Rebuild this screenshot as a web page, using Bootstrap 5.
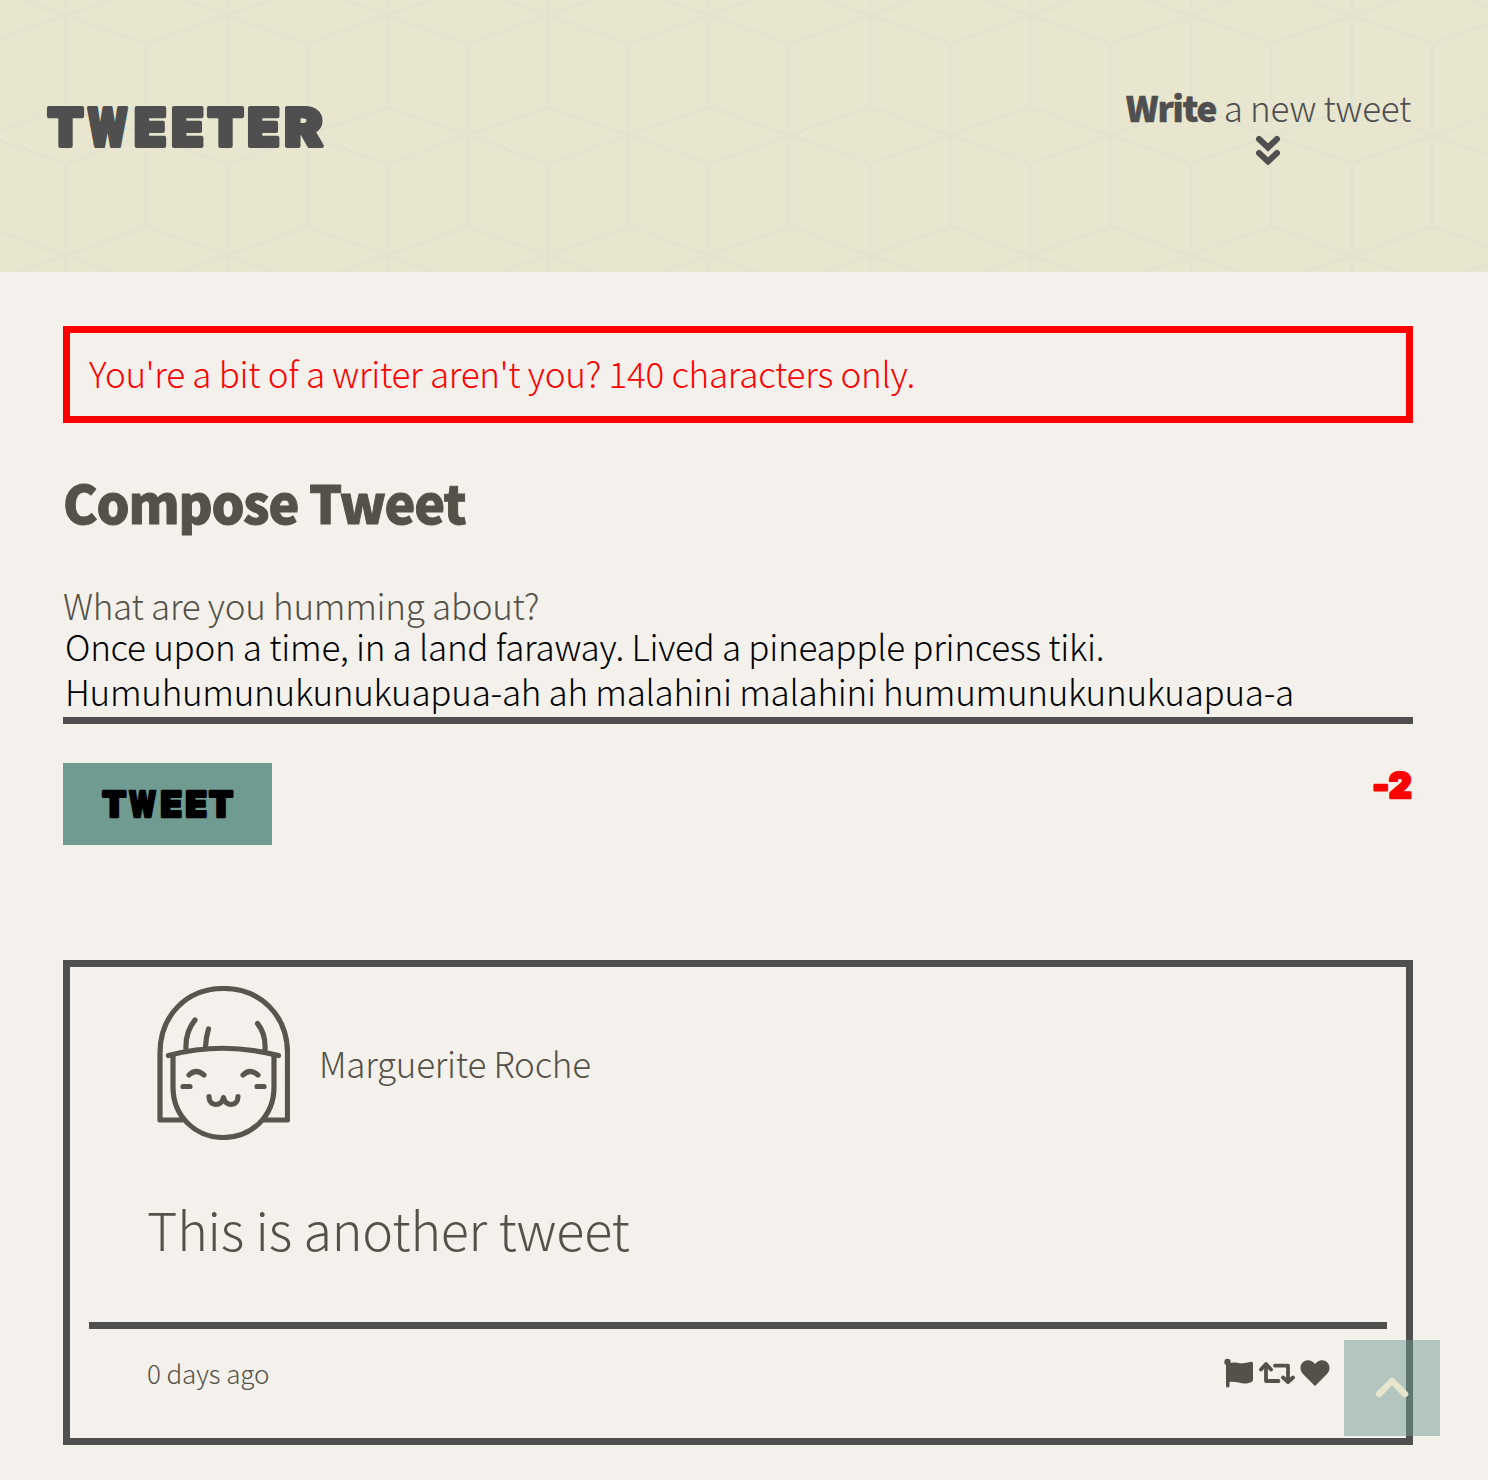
<!DOCTYPE html>
<html lang="en">
<head>
<meta charset="utf-8">
<meta name="viewport" content="width=device-width, initial-scale=1">
<title>Tweeter</title>
<link href="https://cdn.jsdelivr.net/npm/bootstrap@5.3.0/dist/css/bootstrap.min.css" rel="stylesheet">
<script src="https://cdn.jsdelivr.net/npm/bootstrap@5.3.0/dist/js/bootstrap.bundle.min.js" defer></script>
<style>
  body { background: #f4f1ec; color: #545149; font-family: "Noto Sans CJK SC", "Open Sans", sans-serif; font-weight: 300; font-size: 35px; line-height: 46px; letter-spacing: -.26px; height: 1480px; overflow: hidden; }
  .ink { color: #4f4f4f; }
  .topbar { height: 272px; padding: 0 77px 0 47px; background-color: #e8e6cf;
    background-image: url("data:image/svg+xml,%3Csvg xmlns='http://www.w3.org/2000/svg' width='160.75' height='240' viewBox='0 0 160.75 240'%3E%3Cpath d='M-14.5 43.5L66 15.5L146.250 43.5L226.750 15.5M-14.5 -13.5L66 15.5L146.250 -13.5L226.750 15.5M-94.750 163.5L-14.5 135.250L66 163.5L146.250 135.250L226.750 163.5M-94.750 107L-14.5 135.250L66 107L146.250 135.250L226.750 107M-14.5 226.500L66 255.500L146.250 226.500L226.750 255.500M66 15.5V107M66 163.5V255.500M66 -5V15.500M145.800 43.500V226.500' fill='none' stroke='%23e3e3d0' stroke-width='3.2'/%3E%3C/svg%3E"); }
  .block-type { font-family: "Inter", "Liberation Sans", sans-serif; font-weight: 900; letter-spacing: 0; stroke-linejoin: round; overflow: visible; }
  .wordmark { margin-top: 98px; margin-left: -2px; }
  .compose-link { padding-top: 84px; }
  .compose-link b { font-weight: 900; letter-spacing: -1.1px; -webkit-text-stroke: .6px; }
  .compose-link svg { margin: 3px 0 0; }
  .page { padding: 54px 75px 0 63px; }
  .warn { height: 97px; border: 7px solid red; color: red; padding: 17px 19px; }
  .compose-title { font-weight: 900; font-size: 52px; line-height: 60px; letter-spacing: -1.2px; -webkit-text-stroke: .9px; margin: 49px 0 50px; height: 60px; }
  .prompt-label { height: 40px; }
  .tweet-input { border-bottom: 7px solid #4f4f4f; height: 102px; color: #000; padding: 1px 2px 0; line-height: 45px; }
  .tweet-actions { padding-top: 39px; }
  .btn-tweet { width: 209px; height: 82px; background: #6f9b91; border: 0; border-radius: 0; }
  .tweet-box { height: 485px; margin-top: 115px; border: 7px solid #4f4f4f; padding: 19px; }
  .tweet-head { padding-left: 68px; height: 154px; gap: 29px; }
  .tweet-text { font-size: 52px; line-height: 60px; letter-spacing: -.16px; padding: 59px 0 0 58px; height: 182px; }
  .tweet-foot { border-top: 7px solid #4f4f4f; padding: 29px 57px 0 58px; font-size: 26px; line-height: 29px; letter-spacing: -.1px; }
  .to-top { right: 48px; top: 1340px; width: 96px; height: 96px; background: rgba(111,155,145,.5); }
</style>
</head>
<body>
<header class="topbar d-flex justify-content-between align-items-start ink">
  <svg class="wordmark block-type" width="286" height="60" viewBox="45 98 286 60" fill="#4f4f4f" stroke="#4f4f4f" stroke-width="4" font-size="52.500"><text y="146"><tspan x="47.500">T</tspan><tspan x="87.500" textLength="40" lengthAdjust="spacingAndGlyphs">W</tspan><tspan x="134.200 171.500 207.500 247.500">EETE</tspan><tspan x="284.500" textLength="38" lengthAdjust="spacingAndGlyphs">R</tspan></text></svg>
  <div class="compose-link text-center d-flex flex-column">
    <div class="text-nowrap"><b>Write</b> a new tweet</div>
    <svg class="align-self-center" width="26" height="32" viewBox="0 0 26 32" fill="none" stroke="#4f4f4f" stroke-width="6" stroke-linecap="round"><path d="M4 6L13 14.500L22 6M4 20L13 28.500L22 20"/></svg>
  </div>
</header>
<main class="page">
  <div class="warn">You're a bit of a writer aren't you? 140 characters only.</div>
  <h2 class="compose-title">Compose Tweet</h2>
  <form>
    <label class="d-block prompt-label">What are you humming about?</label>
    <div class="tweet-input"><div>Once upon a time, in a land faraway. Lived a pineapple princess tiki.</div><div>Humuhumunukunukuapua-ah ah malahini malahini humumunukunukuapua-a</div></div>
    <div class="d-flex justify-content-between align-items-start tweet-actions">
      <button type="button" class="btn btn-tweet p-0 d-flex"><svg class="block-type" width="209" height="82" viewBox="63 763 209 82" fill="#000" stroke="#000" stroke-width="2.700" font-size="35"><text y="817"><tspan x="102.200">T</tspan><tspan x="129" textLength="27" lengthAdjust="spacingAndGlyphs">W</tspan><tspan x="160.500 185.500 209">EET</tspan></text></svg></button>
      <svg class="block-type" width="46" height="44" viewBox="1367 763 46 44" fill="red" stroke="red" stroke-width="2.700" font-size="35"><text y="797.700" x="1372.500 1389">-2</text></svg>
    </div>
  </form>
  <article class="tweet-box">
    <div class="tweet-head d-flex align-items-center">
      <svg width="133" height="154" viewBox="157 986 133 154" fill="none" stroke="#59554d" stroke-width="5.200" stroke-linecap="round" stroke-linejoin="round"><path d="M184 1120H160V1053C160 1015 187 988.500 223.500 988.500S287.500 1015 287.500 1053V1120H263M168.500 1055.500Q223 1041 278.500 1055.500M173 1056V1087C173 1117 196 1137.500 223.500 1137.500S274 1117 274 1087V1056M186 1050Q185 1032 195 1020M205.500 1047Q206 1037 208.500 1029M265 1050Q266 1034 257.500 1023.500M189 1075Q196 1068 204 1075M243 1075Q250 1068 258 1075M183 1086.500H190M257 1086.500H264M209 1096.500C209 1107 222 1107 223.500 1097.500C225 1107 238 1107 238 1096.500"/></svg>
      <span>Marguerite Roche</span>
    </div>
    <div class="tweet-text">This is another tweet</div>
    <div class="tweet-foot d-flex justify-content-between">
      <span>0 days ago</span>
      <svg width="106" height="30" viewBox="1224 1358 106 30" fill="#545149"><circle cx="1227.500" cy="1362" r="3.200"/><path d="M1226 1362h3.500v1c6-1.500 9 .5 14 .2 3.500-.2 6-1.500 8-1.400q1.500.2 1.500 1.700v16.500q0 1.500-2 2.200c-8 3.500-13-1.200-21.500-.2v4q0 1.600-1.700 1.600t-1.800-1.600z"/><g fill="none" stroke="#545149" stroke-width="3.800" stroke-linecap="round" stroke-linejoin="round"><path stroke-linecap="butt" d="M1266 1364V1381H1278"/><path d="M1276 1381H1278.500M1261 1369.500L1266 1364L1271 1369.500M1275 1365.700H1288V1381M1283 1377.500L1288 1382L1293 1377.500"/></g><path d="M1315 1386L1303 1374C1296 1366 1305 1356.500 1313 1362L1315 1364L1317 1362C1325 1356.500 1334 1366 1327 1374Z"/></svg>
    </div>
  </article>
</main>
<a class="to-top position-absolute d-flex align-items-center justify-content-center" aria-label="Top"><svg width="36" height="24" viewBox="0 0 36 24" fill="none" stroke="#e7e5cd" stroke-width="6.500" stroke-linecap="round" stroke-linejoin="round"><path d="M5 18L18 5L31 18"/></svg></a>
</body>
</html>
